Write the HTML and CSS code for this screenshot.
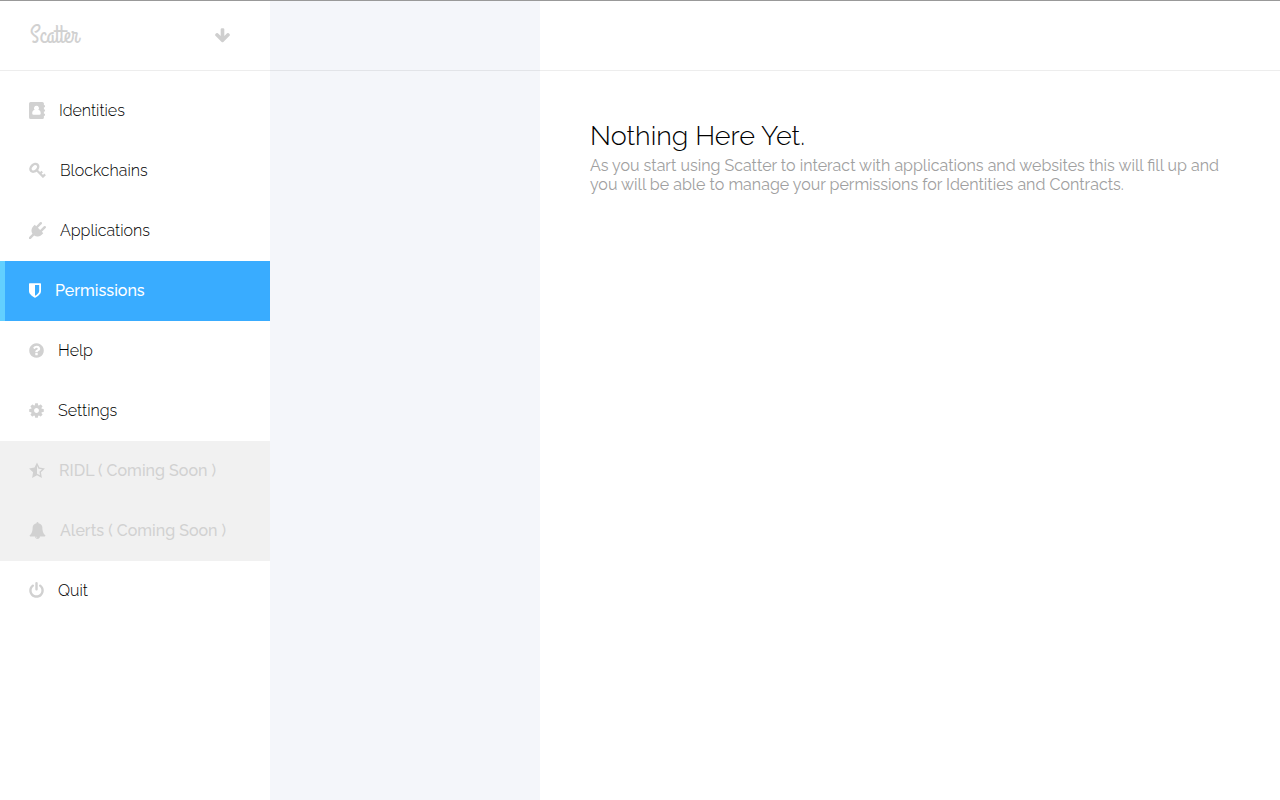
FILE: index.html
```html
<!DOCTYPE html>
<html lang="en">
<head>
<meta charset="utf-8">
<title>Scatter</title>
<link rel="stylesheet" href="styles.css">
</head>
<body>
<div class="app">
  <aside class="sidebar">
    <header class="bar">
      <a class="logo" href="#">Scatter</a>
      <button class="collapse" type="button" aria-label="Collapse">
        <svg class="icon" width="17" height="17" viewBox="0 0 1792 1792"><path d="M1675 832q0 53-37 90l-651 652q-39 37-91 37-53 0-90-37l-651-652q-38-36-38-90 0-53 38-91l74-75q39-37 91-37 53 0 90 37l294 294v-704q0-52 38-90t90-38h128q52 0 90 38t38 90v704l294-294q37-37 90-37 52 0 91 37l75 75q37 39 37 91z"/></svg>
      </button>
    </header>
    <nav class="menu">
      <a class="item" href="#">
        <svg class="icon" width="16" height="17" viewBox="0 0 15 16"><path fill-rule="evenodd" d="M1.500 0H12.500Q14 0 14 1.500V3H15V5H14V7H15V9H14V11H15V13H14V14.500Q14 16 12.500 16H1.500Q0 16 0 14.500V1.500Q0 0 1.500 0ZM7 3.500A2.300 2.300 0 0 0 5.300 7.400C3.700 7.600 3 9 3 10.800Q3 12 4.200 12H9.800Q11 12 11 10.800C11 9 10.300 7.600 8.700 7.400A2.300 2.300 0 0 0 7 3.500Z"/></svg>
        <span>Identities</span>
      </a>
      <a class="item" href="#">
        <svg class="icon" width="17" height="17" viewBox="0 0 17 17"><g fill="none" stroke="currentColor"><ellipse cx="5.300" cy="5.800" rx="4.400" ry="3.200" transform="rotate(-45 5.300 5.800)" stroke-width="2.500"/><path d="M7.500 8L14.600 15.100M10.400 12.300L13.200 9.500M13.300 15.200L16.100 12.400" stroke-width="2.200"/></g></svg>
        <span>Blockchains</span>
      </a>
      <a class="item" href="#">
        <svg class="icon" width="17" height="17" viewBox="0 0 1792 1792"><path d="M1755 453q37 38 37 90.500t-37 90.500l-401 400 150 150-160 160q-163 163-389.500 186.500t-411.500-100.500l-362 362h-181v-181l362-362q-124-185-100.500-411.500t186.500-389.500l160-160 150 150 400-401q38-37 91-37t90 37 37 90.500-37 90.500l-400 401 234 234 401-400q38-37 91-37t90 37z"/></svg>
        <span>Applications</span>
      </a>
      <a class="item active" href="#" aria-current="page">
        <svg class="icon" width="12" height="17" viewBox="256 0 1280 1792"><path d="M1344 960v-640h-448v1137q119-63 213-137 235-184 235-360zm192-768v768q0 86-33.500 170.500t-83 150-118 127.500-126.500 103-121 77.500-89.500 49.500-42.500 20q-12 6-26 6t-26-6q-16-7-42.500-20t-89.500-49.500-121-77.500-126.500-103-118-127.500-83-150-33.500-170.500v-768q0-26 19-45t45-19h1152q26 0 45 19t19 45z"/></svg>
        <span>Permissions</span>
      </a>
      <a class="item" href="#">
        <svg class="icon" width="15" height="17" viewBox="128 0 1536 1792"><path d="M1024 1376v-192q0-14-9-23t-23-9h-192q-14 0-23 9t-9 23v192q0 14 9 23t23 9h192q14 0 23-9t9-23zm256-672q0-88-55.500-163t-138.500-116-170-41q-243 0-371 213-15 24 8 42l132 100q7 6 19 6 16 0 25-12 53-68 86-92 34-24 86-24 48 0 85.500 26t37.500 59q0 38-20 61t-68 45q-63 28-115.500 86.500t-52.500 125.500v36q0 14 9 23t23 9h192q14 0 23-9t9-23q0-19 21.500-49.500t54.500-49.500q32-18 49-28.500t46-35 44.500-48 28-60.500 12.500-81zm384 192q0 209-103 385.500t-279.500 279.500-385.500 103-385.500-103-279.500-279.500-103-385.500 103-385.500 279.500-279.500 385.500-103 385.500 103 279.500 279.500 103 385.500z"/></svg>
        <span>Help</span>
      </a>
      <a class="item" href="#">
        <svg class="icon" width="15" height="17" viewBox="128 0 1536 1792"><path d="M1152 896q0-106-75-181t-181-75-181 75-75 181 75 181 181 75 181-75 75-181zm512-109v222q0 12-8 23t-20 13l-185 28q-19 54-39 91 35 50 107 138 10 12 10 25t-9 23q-27 37-99 108t-94 71q-12 0-26-9l-138-108q-44 23-91 38-16 136-29 186-7 28-36 28h-222q-14 0-24.500-8.500t-11.500-21.500l-28-184q-49-16-90-37l-141 107q-10 9-25 9-14 0-25-11-126-114-165-168-7-10-7-23 0-12 8-23 15-21 51-66.500t54-70.500q-27-50-41-99l-183-27q-13-2-21-12.500t-8-23.500v-222q0-12 8-23t19-13l186-28q14-46 39-92-40-57-107-138-10-12-10-24 0-10 9-23 26-36 98.500-107.500t94.500-71.500q13 0 26 10l138 107q44-23 91-38 16-136 29-186 7-28 36-28h222q14 0 24.500 8.500t11.500 21.500l28 184q49 16 90 37l142-107q9-9 24-9 13 0 25 10 129 119 165 170 7 8 7 22 0 12-8 23-15 21-51 66.500t-54 70.500q26 50 41 98l183 28q13 2 21 12.500t8 23.500z"/></svg>
        <span>Settings</span>
      </a>
      <a class="item soon" href="#" aria-disabled="true">
        <svg class="icon" width="16" height="17" viewBox="0 0 15 16"><path fill-rule="evenodd" d="M7.500 .5L9.800 5.200L15 6L11.200 9.700L12.100 15L7.500 12.500L2.900 15L3.800 9.700L0 6L5.200 5.200ZM7.500 3.600V11L10.300 12.500L9.800 9.200L12.200 6.900L8.900 6.400Z"/></svg>
        <span>RIDL ( Coming Soon )</span>
      </a>
      <a class="item soon" href="#" aria-disabled="true">
        <svg class="icon" width="17" height="17" viewBox="0 0 1792 1792"><path d="M912 1696q0-16-16-16-59 0-101.500-42.500t-42.500-101.500q0-16-16-16t-16 16q0 73 51.500 124.500t124.500 51.500q16 0 16-16zm816-288q0 52-38 90t-90 38h-448q0 106-75 181t-181 75-181-75-75-181h-448q-52 0-90-38t-38-90q50-42 91-88t85-119.500 74.500-158.500 50-206 19.500-260q0-152 117-282.500t307-158.500q-8-19-8-39 0-40 28-68t68-28 68 28 28 68q0 20-8 39 190 28 307 158.500t117 282.500q0 139 19.500 260t50 206 74.500 158.500 85 119.500 91 88z"/></svg>
        <span>Alerts ( Coming Soon )</span>
      </a>
      <a class="item" href="#">
        <svg class="icon" width="15" height="17" viewBox="128 0 1536 1792"><path d="M1664 896q0 156-61 298t-164 245-245 164-298 61-298-61-245-164-164-245-61-298q0-182 80.500-343t226.500-270q43-32 95.500-25t83.500 50q32 42 24.500 94.500t-49.500 84.500q-98 74-151.500 181t-53.500 228q0 104 40.500 198.500t109.500 163.500 163.500 109.500 198.500 40.500 198.500-40.500 163.500-109.500 109.500-163.500 40.500-198.500q0-121-53.500-228t-151.500-181q-42-32-49.500-84.500t24.500-94.500q31-43 84-50t95 25q146 109 226.500 270t80.500 343zm-640-768v640q0 52-38 90t-90 38-90-38-38-90v-640q0-52 38-90t90-38 90 38 38 90z"/></svg>
        <span>Quit</span>
      </a>
    </nav>
  </aside>
  <section class="list" aria-label="Permission list">
    <div class="bar"></div>
  </section>
  <main class="main">
    <div class="bar"></div>
    <div class="empty">
      <h1 class="title">Nothing Here Yet.</h1>
      <p class="text">As you start using Scatter to interact with applications and websites this will fill up and you will be able to manage your permissions for Identities and Contracts.</p>
    </div>
  </main>
</div>
</body>
</html>
```
FILE: styles.css
```css
* {
  box-sizing: border-box;
}

body {
  margin: 0;
  background: #fff;
  color: #000;
  font-family: Raleway, Lato, sans-serif;
  font-size: 16px;
}

.app {
  display: grid;
  grid-template-columns: 270px 270px 1fr;
  min-height: 100vh;
  border-top: 1px solid #999;
}

.bar {
  display: flex;
  align-items: center;
  justify-content: space-between;
  height: 70px;
  padding: 0 39px 0 30px;
  border-bottom: 1px solid rgba(0, 0, 0, 0.07);
}

.logo {
  color: #d1d1d1;
  font-family: "Grand Hotel", Lobster, Pacifico, Lato, cursive;
  font-size: 24px;
  text-decoration: none;
}

.collapse {
  display: flex;
  padding: 0;
  border: 0;
  background: none;
  color: #cfcfcf;
}

.icon {
  flex: none;
  fill: currentColor;
}

.menu {
  padding-top: 10px;
}

.item {
  display: flex;
  align-items: center;
  gap: 14px;
  height: 60px;
  padding: 0 0 2px 29px;
  color: #000;
  font-weight: 300;
  text-decoration: none;
}

.item .icon {
  color: #d1d1d1;
}

.active {
  padding-left: 24px;
  border-left: 5px solid #62d0ff;
  background: #39acff;
  color: #fff;
  font-weight: 500;
}

.item.active .icon {
  color: #fff;
}

.soon {
  background: #f1f1f1;
  color: #d1d1d1;
  font-weight: 500;
}

.list {
  background: #f4f6fa;
}

.empty {
  padding: 50px;
}

.title {
  margin: 0;
  font-size: 27px;
  font-weight: 300;
  line-height: 30px;
}

.text {
  margin: 5px 0 0;
  color: #a0a0a0;
  font-size: 16px;
  font-weight: 400;
  line-height: 19px;
}
```
